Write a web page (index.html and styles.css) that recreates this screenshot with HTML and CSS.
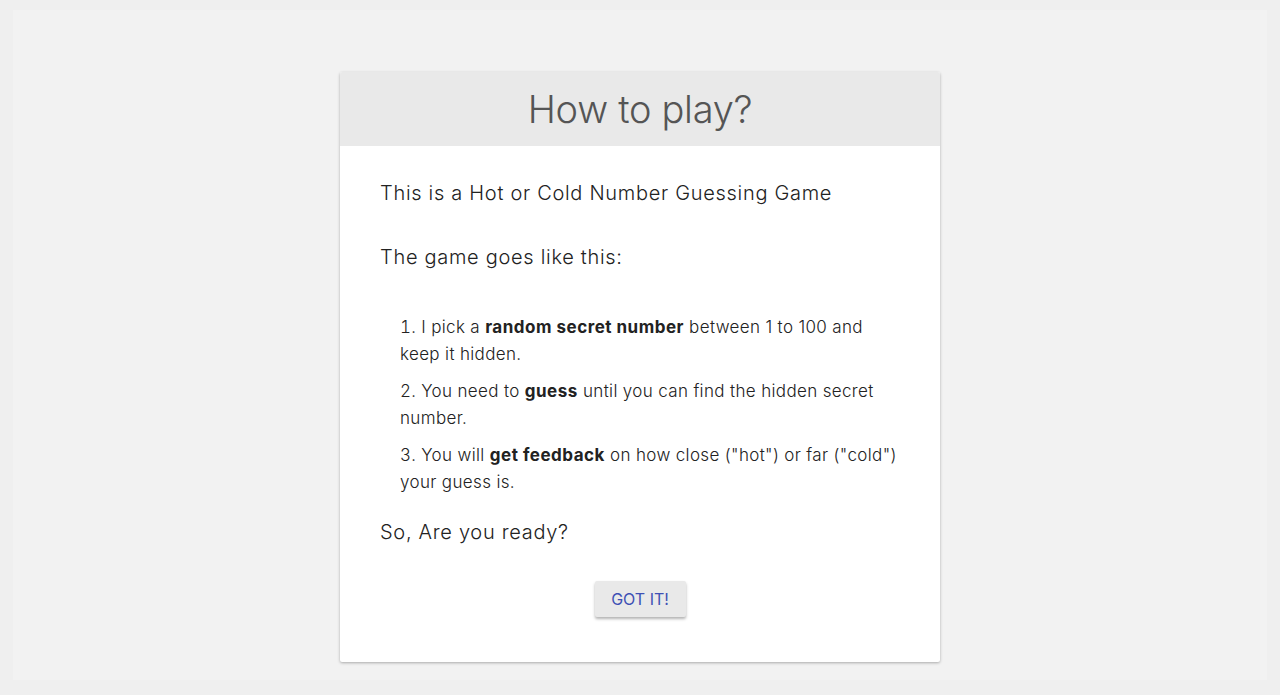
FILE: index.html
```html
<!DOCTYPE html>
<html>
<head>
<meta charset="utf-8">
<link rel="stylesheet" href="styles.css">
</head>
<body>
<div class="frame">
  <div class="card">
    <div class="card-header"><h1>How to play?</h1></div>
    <div class="card-body">
      <p class="lead">This is a Hot or Cold Number Guessing Game</p>
      <p class="lead">The game goes like this:</p>
      <ol class="steps">
        <li>I pick a <b>random secret number</b> between 1 to 100 and keep it hidden.</li>
        <li>You need to <b>guess</b> until you can find the hidden secret number.</li>
        <li>You will <b>get feedback</b> on how close ("hot") or far ("cold") your guess is.</li>
      </ol>
      <p class="lead ready">So, Are you ready?</p>
      <div class="actions"><button class="btn">GOT IT!</button></div>
    </div>
  </div>
</div>
</body>
</html>
```
FILE: styles.css
```css
html, body {
  margin: 0;
  padding: 0;
  height: 100%;
}
body {
  background: #efefef;
  font-family: Inter, "Liberation Sans", sans-serif;
  font-weight: 300;
  color: #222;
  padding: 10px 13px 15px 13px;
  box-sizing: border-box;
}
.frame {
  background: #f2f2f2;
  height: 100%;
  box-sizing: border-box;
  padding-top: 62px;
  display: flex;
  justify-content: center;
  align-items: flex-start;
}
.card {
  width: 600px;
  background: #fff;
  border-radius: 2px;
  box-shadow: 0 1px 3px rgba(0,0,0,0.3);
  overflow: hidden;
}
.card-header {
  background: #e9e9e9;
  height: 74px;
  display: flex;
  align-items: center;
  justify-content: center;
}
.card-header h1 {
  margin: 0;
  font-size: 38px;
  font-weight: 300;
  letter-spacing: -0.3px;
  color: #555;
}
.card-body {
  padding: 32px 40px 45px;
}
.lead {
  margin: 0 0 34px;
  font-size: 20px;
  line-height: 30px;
  letter-spacing: 0.7px;
}
.steps {
  list-style-position: inside;
  margin: 41.5px -6px 0 0;
  padding: 0 0 0 20px;
  font-size: 17px;
  line-height: 27px;
  letter-spacing: 0.35px;
}
.steps li {
  margin-bottom: 10px;
}
.steps li:last-child {
  margin-bottom: 0;
}
.steps b {
  font-weight: 700;
  letter-spacing: 0.5px;
}
.ready {
  margin-top: 21.5px;
  margin-bottom: 0;
}
.actions {
  display: flex;
  justify-content: center;
  margin-top: 34px;
}
.btn {
  background: #e9e9e9;
  border: none;
  border-radius: 2px;
  box-shadow: 0 2px 3px rgba(0,0,0,0.3);
  color: #3f51b5;
  font-family: Inter, "Liberation Sans", sans-serif;
  font-size: 16px;
  font-weight: 400;
  width: 91px;
  height: 36px;
  padding: 0;
}
```
